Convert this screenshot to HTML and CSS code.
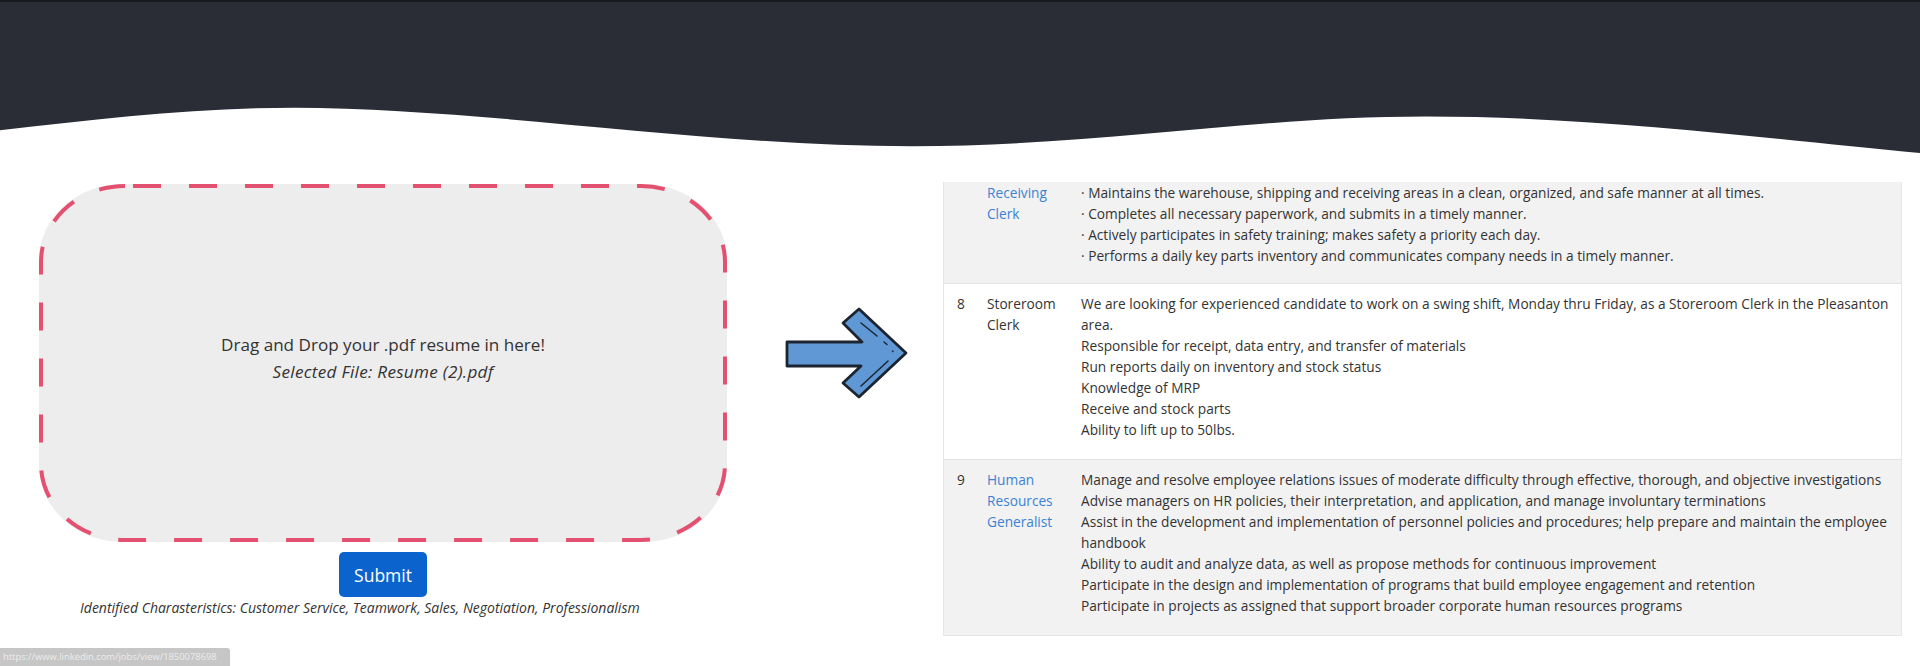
FILE: index.html
```html
<!DOCTYPE html>
<html lang="en">
<head>
<meta charset="utf-8">
<title>Resume Matcher</title>
<link rel="stylesheet" href="styles.css">
</head>
<body>
<header class="hero">
  <svg class="wave" viewBox="0 0 1920 156" preserveAspectRatio="none" aria-hidden="true">
    <path d="M0 0 H1920 V153 C1780 140 1600 116 1426 116 C1250 116 1100 146 912 146 C700 146 480 107 294 107 C200 107 100 118 0 130 Z" fill="#2a2d36"/>
  </svg>
</header>
<main class="main">
  <section class="left">
    <div class="dropzone">
      <svg class="dash" aria-hidden="true">
        <rect x="2" y="2" width="684" height="354" rx="84" ry="76" fill="none" stroke="#e4506f" stroke-width="4" stroke-dasharray="28 28" stroke-dashoffset="-8"/>
      </svg>
      <div class="drop-text">
        <p class="drop-line">Drag and Drop your .pdf resume in here!</p>
        <p class="drop-file">Selected File: Resume (2).pdf</p>
      </div>
    </div>
    <button class="submit" type="button">Submit</button>
    <p class="traits">Identified Charasteristics: Customer Service, Teamwork, Sales, Negotiation, Professionalism</p>
  </section>
  <div class="arrow-col">
    <svg class="arrow" viewBox="780 300 135 105" width="135" height="105" aria-hidden="true">
      <polygon points="787,342 862,342 843,323 859,309 906,353 859,397 843,383 861,366 787,366" fill="#6098d6" stroke="#1c2430" stroke-width="2.8" stroke-linejoin="round"/>
      <g stroke="#1c2430" stroke-width="1.5" stroke-linecap="round" fill="none">
        <line x1="861" y1="323" x2="877" y2="336"/>
        <line x1="884" y1="342" x2="887" y2="344.5"/>
        <line x1="892.5" y1="351" x2="893" y2="351.5"/>
        <line x1="861" y1="386" x2="888" y2="361"/>
      </g>
    </svg>
  </div>
  <section class="results">
    <table class="jobs">
      <colgroup><col class="c-num"><col class="c-title"><col></colgroup>
      <tbody>
        <tr class="striped first">
          <td class="num"></td>
          <td class="title"><a href="#">Receiving Clerk</a></td>
          <td class="desc">
            <div>· Maintains the warehouse, shipping and receiving areas in a clean, organized, and safe manner at all times.</div>
            <div>· Completes all necessary paperwork, and submits in a timely manner.</div>
            <div>· Actively participates in safety training; makes safety a priority each day.</div>
            <div>· Performs a daily key parts inventory and communicates company needs in a timely manner.</div>
          </td>
        </tr>
        <tr>
          <td class="num">8</td>
          <td class="title"><span class="plain">Storeroom Clerk</span></td>
          <td class="desc">
            <div>We are looking for experienced candidate to work on a swing shift, Monday thru Friday, as a Storeroom Clerk in the Pleasanton area.</div>
            <div>Responsible for receipt, data entry, and transfer of materials</div>
            <div>Run reports daily on inventory and stock status</div>
            <div>Knowledge of MRP</div>
            <div>Receive and stock parts</div>
            <div>Ability to lift up to 50lbs.</div>
          </td>
        </tr>
        <tr class="striped">
          <td class="num">9</td>
          <td class="title"><a href="#">Human Resources Generalist</a></td>
          <td class="desc">
            <div>Manage and resolve employee relations issues of moderate difficulty through effective, thorough, and objective investigations</div>
            <div>Advise managers on HR policies, their interpretation, and application, and manage involuntary terminations</div>
            <div>Assist in the development and implementation of personnel policies and procedures; help prepare and maintain the employee handbook</div>
            <div>Ability to audit and analyze data, as well as propose methods for continuous improvement</div>
            <div>Participate in the design and implementation of programs that build employee engagement and retention</div>
            <div>Participate in projects as assigned that support broader corporate human resources programs</div>
          </td>
        </tr>
      </tbody>
    </table>
  </section>
</main>
<div class="status">https://www.linkedin.com/jobs/view/1850078698</div>
</body>
</html>
```
FILE: styles.css
```css
* { box-sizing: border-box; }
html, body { margin: 0; padding: 0; }
body {
  background: #ffffff;
  font-family: "Open Sans", "Noto Sans", sans-serif;
  color: #333333;
  width: 1920px;
  height: 666px;
  overflow: hidden;
}
.hero {
  height: 156px;
  border-top: 2px solid #17191e;
  background: #ffffff;
}
.wave { display: block; width: 100%; height: 154px; }

.main {
  display: flex;
  align-items: flex-start;
  padding-top: 26px;
}
.left {
  width: 766px;
  padding: 2px 39px 0;
  display: flex;
  flex-direction: column;
  align-items: center;
}
.dropzone {
  position: relative;
  width: 688px;
  height: 358px;
  background: #ededed;
  border-radius: 84px / 76px;
  display: flex;
  align-items: center;
  justify-content: center;
  padding-bottom: 11px;
}
.dash { position: absolute; left: 0; top: 0; width: 688px; height: 358px; }
.drop-text { text-align: center; font-size: 17.1px; line-height: 27px; color: #333; }
.drop-line, .drop-file { margin: 0; }
.drop-file { font-style: italic; letter-spacing: 0.3px; }
.submit {
  margin-top: 10px;
  height: 45px;
  padding: 0 15px;
  border: none;
  border-radius: 5px;
  background: #0b63ce;
  color: #ffffff;
  font-family: "Open Sans", sans-serif;
  font-size: 17.5px;
}
.traits {
  align-self: flex-start;
  margin: 0 0 0 41px;
  font-size: 14px;
  line-height: 21px;
  font-style: italic;
  color: #333;
  white-space: nowrap;
}

.arrow-col { width: 177px; padding: 118px 0 0 14px; }
.arrow { display: block; }

.results {
  width: 959px;
  border: 1px solid #e6e6e6;
  border-top: none;
  overflow: hidden;
}
.jobs {
  width: 100%;
  border-collapse: collapse;
  table-layout: fixed;
  font-size: 13.7px;
  line-height: 21px;
}
.c-num { width: 35px; }
.c-title { width: 94px; }
.jobs tr { border-bottom: 1px solid #dfe2e6; }
.jobs tr:last-child { border-bottom: none; }
.jobs td { vertical-align: top; padding: 9px 8px 19px; }
.jobs td.num { padding-left: 13px; padding-right: 4px; }
.jobs tr.first td { padding-top: 0; padding-bottom: 17px; }
.striped { background: #f2f2f2; }
.title a { color: #3b82d4; text-decoration: none; }
.title .plain { color: #333; }

.status {
  position: fixed;
  left: 0;
  bottom: 0;
  width: 230px;
  height: 18px;
  background: #c6c6c6;
  color: #ececec;
  font-size: 9.4px;
  line-height: 18px;
  padding-left: 3px;
  border-top-right-radius: 3px;
  white-space: nowrap;
  overflow: hidden;
}
```
